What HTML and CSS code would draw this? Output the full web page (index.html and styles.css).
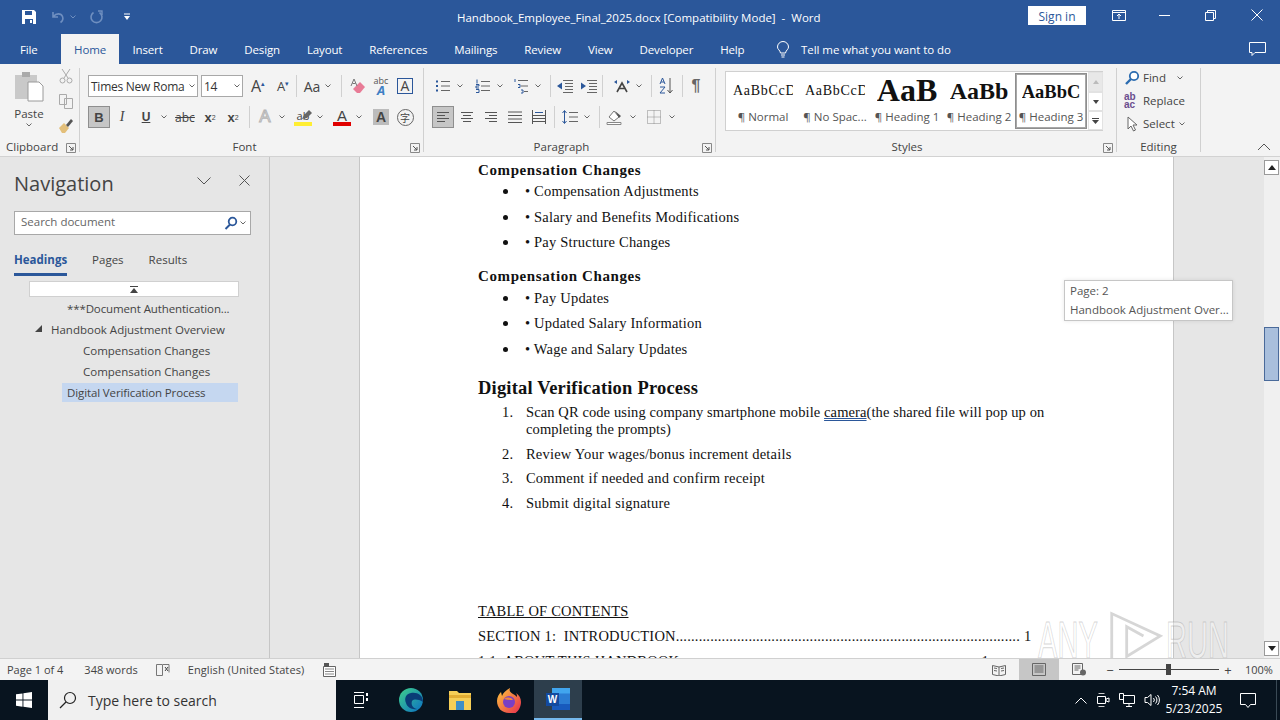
FILE: index.html
```html
<!DOCTYPE html>
<html lang="en">
<head>
    <meta charset="UTF-8">
    <title>Handbook_Employee_Final_2025.docx [Compatibility Mode] - Word</title>
    <link rel="stylesheet" href="styles.css">
</head>
<body>
<svg class="defs" width="0" height="0">
    <symbol id="chev" viewBox="0 0 8 8"><path d="M1.5 2.5 4 5l2.5-2.5" fill="none" stroke="#666" stroke-width="1"/></symbol>
    <symbol id="launch" viewBox="0 0 10 10"><path d="M.5.500h9v9h-9z" fill="none" stroke="#888"/><path d="M3 3l4 4M7 4v3H4" fill="none" stroke="#555"/></symbol>
    <symbol id="lines" viewBox="0 0 16 16"><path d="M1 3h14M1 6.500h14M1 10h14M1 13.500h14" stroke="#555" fill="none"/></symbol>
    <symbol id="left" viewBox="0 0 16 16"><path d="M2 3.500h12M2 6.500h8M2 9.500h12M2 12.500h8" stroke="#555" fill="none"/></symbol>
    <symbol id="center" viewBox="0 0 16 16"><path d="M2 3.500h12M4 6.500h8M2 9.500h12M4 12.500h8" stroke="#555" fill="none"/></symbol>
    <symbol id="right" viewBox="0 0 16 16"><path d="M2 3.500h12M6 6.500h8M2 9.500h12M6 12.500h8" stroke="#555" fill="none"/></symbol>
</svg>

<div class="titlebar">
    <div class="qat">
        <svg class="qat-save" width="16" height="16" viewBox="0 0 16 16"><path d="M1 1h12l2 2v12H1z" fill="#fff"/><path d="M4 2h7v4H4zM4 10h8v5H4z" fill="#2b579a"/><path d="M9 11h2v3H9z" fill="#fff"/></svg>
        <svg class="qat-undo" width="16" height="14" viewBox="0 0 16 14"><path d="M3 2v5h5M3.500 6.500C6 3 11 3 12.500 6.500c1 2.500 0 4.500-2 6" fill="none" stroke="#6f8fc0" stroke-width="1.600"/></svg>
        <svg class="qat-chev" width="8" height="8" viewBox="0 0 8 8"><path d="M1.500 2.500 4 5l2.500-2.500" fill="none" stroke="#6f8fc0"/></svg>
        <svg class="qat-redo" width="15" height="15" viewBox="0 0 15 15"><path d="M10.500 2.500a5.500 5.500 0 1 1-6 0" fill="none" stroke="#6f8fc0" stroke-width="1.600"/><path d="M9 1h4v4" fill="none" stroke="#6f8fc0" stroke-width="1.400"/></svg>
        <svg class="qat-more" width="8" height="8" viewBox="0 0 8 8"><path d="M1 1h6" stroke="#fff"/><path d="M1 3h6L4 7z" fill="#fff"/></svg>
    </div>
    <div class="doc-title">Handbook_Employee_Final_2025.docx [Compatibility Mode]&nbsp; -&nbsp; Word</div>
    <button class="signin">Sign in</button>
    <svg class="win-display" width="14" height="11" viewBox="0 0 14 11"><path d="M.5.500h13v10H.5zM.5 2.500h13" fill="none" stroke="#fff"/><path d="M7 9V4M5 6l2-2 2 2" fill="none" stroke="#fff"/></svg>
    <svg class="win-min" width="11" height="1"><path d="M0 .5h11" stroke="#fff"/></svg>
    <svg class="win-max" width="11" height="11" viewBox="0 0 11 11"><path d="M.5 2.500h8v8h-8zM2.500 2.500v-2h8v8h-2" fill="none" stroke="#fff"/></svg>
    <svg class="win-close" width="12" height="12" viewBox="0 0 12 12"><path d="M.5.500l11 11M11.500.500l-11 11" stroke="#fff"/></svg>
</div>

<div class="tabs">
    <a class="tab tab-file">File</a>
    <a class="tab active">Home</a>
    <a class="tab">Insert</a>
    <a class="tab">Draw</a>
    <a class="tab">Design</a>
    <a class="tab">Layout</a>
    <a class="tab">References</a>
    <a class="tab">Mailings</a>
    <a class="tab">Review</a>
    <a class="tab">View</a>
    <a class="tab">Developer</a>
    <a class="tab">Help</a>
    <svg class="bulb" width="14" height="17" viewBox="0 0 14 17"><path d="M4.500 12C4 9 1.500 8.500 1.500 6a5.500 5.500 0 0 1 11 0c0 2.500-2.500 3-3 6zM5 14h4M5.500 16h3" fill="none" stroke="#fff"/></svg>
    <span class="tellme">Tell me what you want to do</span>
    <svg class="comment" width="17" height="15" viewBox="0 0 17 15"><path d="M.5.500h16v10H6l-3 3v-3H.5z" fill="none" stroke="#fff"/></svg>
</div>

<div class="ribbon">
    <section class="group g-clip">
        <div class="clip-body">
            <div class="paste">
                <svg width="30" height="32" viewBox="0 0 30 32"><path d="M1 4h22v24H1z" fill="#c9c9c9"/><path d="M8 1h8v5H8z" fill="#aaa"/><path d="M14 11h11l4 4v15H14z" fill="#fff" stroke="#9a9a9a"/></svg>
                <span>Paste</span>
                <svg width="8" height="8"><use href="#chev"/></svg>
            </div>
            <div class="clip-small">
                <svg width="16" height="16" viewBox="0 0 16 16"><path d="M4 1l6 9M12 1l-6 9" stroke="#aaa" fill="none"/><circle cx="4.500" cy="12.500" r="2.500" fill="none" stroke="#aaa"/><circle cx="11.500" cy="12.500" r="2.500" fill="none" stroke="#aaa"/></svg>
                <svg width="16" height="16" viewBox="0 0 16 16"><path d="M1.500 1.500h7v10h-7zM6.500 5.500h8v10h-8z" fill="#f3f3f3" stroke="#aaa"/></svg>
                <svg width="16" height="16" viewBox="0 0 16 16"><path d="M1 10l5-5 5 5-4 5H4z" fill="#e3bf7a"/><path d="M8 7l5-6 2 2-5 6z" fill="#555"/></svg>
            </div>
        </div>
        <div class="group-label">Clipboard<svg class="launch" width="10" height="10"><use href="#launch"/></svg></div>
    </section>

    <section class="group g-font">
        <div class="rows">
            <div class="row">
                <div class="combo combo-font">Times New Roma<svg width="8" height="8"><use href="#chev"/></svg></div>
                <div class="combo combo-size m3">14<svg width="8" height="8"><use href="#chev"/></svg></div>
                <span class="tool m3 glyph">A<sup class="up blue">▴</sup></span>
                <span class="tool m1 glyph g-sm">A<sup class="up blue">▾</sup></span>
                <i class="sep m1"></i>
                <span class="tool sm m5 aa">Aa</span>
                <svg class="chev"><use href="#chev"/></svg>
                <i class="sep m7"></i>
                <span class="tool md m5"><svg width="16" height="16" viewBox="0 0 16 16"><path d="M7 15l-4-4 7-7 5 5-5 6z" fill="#e87b96"/><path d="M1 8l3-7 3 7M2.500 5.500h3" fill="none" stroke="#777"/></svg></span>
                <span class="tool md m1 abc-a">abc<b>A</b></span>
                <span class="tool md m2"><span class="a-box">A</span></span>
            </div>
            <div class="row">
                <span class="tool bold-on">B</span>
                <span class="tool ital">I</span>
                <span class="tool und">U</span>
                <svg class="chev"><use href="#chev"/></svg>
                <span class="tool md m4 strike">abc</span>
                <span class="tool md m3 sub">x<sub>2</sub></span>
                <span class="tool md m1 sub">x<sup>2</sup></span>
                <i class="sep m5"></i>
                <span class="tool md m4 effect">A</span>
                <svg class="chev"><use href="#chev"/></svg>
                <span class="tool md m4 hl">ab<svg class="pen" width="12" height="12" viewBox="0 0 12 12"><path d="M1 10l2-4 5-5 3 3-5 5z" fill="#666"/></svg><i></i></span>
                <svg class="chev"><use href="#chev"/></svg>
                <span class="tool md m5 red-a">A<i></i></span>
                <svg class="chev"><use href="#chev"/></svg>
                <span class="tool md m5"><span class="a-shade">A</span></span>
                <span class="tool md m2"><span class="phon">字</span></span>
            </div>
        </div>
        <div class="group-label">Font<svg class="launch" width="10" height="10"><use href="#launch"/></svg></div>
    </section>

    <section class="group g-para">
        <div class="rows">
            <div class="row">
                <span class="tool md"><svg width="16" height="16" viewBox="0 0 16 16"><path d="M6 3.500h9M6 8h9M6 12.500h9" stroke="#666"/><path d="M1 2.500h2v2H1zM1 7h2v2H1zM1 11.500h2v2H1z" fill="#2b579a"/></svg></span>
                <svg class="chev"><use href="#chev"/></svg>
                <span class="tool md m6"><svg width="16" height="16" viewBox="0 0 16 16"><path d="M6 3.500h9M6 8h9M6 12.500h9" stroke="#666"/><path d="M2 1.500v4M1 6.500h3v1.500H1v2h3M1 11.500h3v3H1" fill="none" stroke="#2b579a"/></svg></span>
                <svg class="chev"><use href="#chev"/></svg>
                <span class="tool md m4"><svg width="16" height="16" viewBox="0 0 16 16"><path d="M5 2.500h10M8 8h7M11 13.500h4" stroke="#666"/><path d="M2 1v3M5 6.500h2v3H5M8 12h2v3H8" fill="none" stroke="#2b579a"/></svg></span>
                <svg class="chev"><use href="#chev"/></svg>
                <i class="sep m6"></i>
                <span class="tool md m3"><svg width="18" height="14" viewBox="0 0 18 14"><path d="M7 1.500h10M9 4.500h8M9 7.500h8M9 10.500h8M7 13.500h10" stroke="#666"/><path d="M1 7l5-3.500v7z" fill="#2b579a"/></svg></span>
                <span class="tool md m2"><svg width="18" height="14" viewBox="0 0 18 14"><path d="M7 1.500h10M9 4.500h8M9 7.500h8M9 10.500h8M7 13.500h10" stroke="#666"/><path d="M6 7l-5-3.500v7z" fill="#2b579a"/></svg></span>
                <i class="sep m2"></i>
                <span class="tool md m8"><svg width="18" height="14" viewBox="0 0 18 14"><path d="M4 13l5-9 5 9M6 9.500h6" fill="none" stroke="#444" stroke-width="1.600"/><path d="M1 3l3-2v4zM17 3l-3-2v4z" fill="#2b579a"/></svg></span>
                <svg class="chev"><use href="#chev"/></svg>
                <i class="sep m6"></i>
                <span class="tool md m3"><svg width="16" height="18" viewBox="0 0 16 18"><path d="M2 7l2.500-6L7 7M3 5h3" fill="none" stroke="#2b579a"/><path d="M2 10h5l-5 6h5" fill="none" stroke="#2b579a"/><path d="M12 1v15M9.500 13l2.500 3 2.500-3" fill="none" stroke="#555"/></svg></span>
                <i class="sep m5"></i>
                <span class="tool md m2 pilcrow">¶</span>
            </div>
            <div class="row">
                <span class="tool md on"><svg width="16" height="16"><use href="#left"/></svg></span>
                <span class="tool md m2"><svg width="16" height="16"><use href="#center"/></svg></span>
                <span class="tool md m2"><svg width="16" height="16"><use href="#right"/></svg></span>
                <span class="tool md m2"><svg width="16" height="16"><use href="#lines"/></svg></span>
                <span class="tool md m2"><svg width="16" height="16" viewBox="0 0 16 16"><path d="M1.500 1v14M14.500 1v14M1 6.500h14M1 9.500h14M1 12.500h14" stroke="#555" fill="none"/><path d="M4 3.500h8" stroke="#2b579a"/></svg></span>
                <i class="sep m4"></i>
                <span class="tool md m4"><svg width="18" height="16" viewBox="0 0 18 16"><path d="M8 3.500h9M8 8h9M8 12.500h9" stroke="#666"/><path d="M3.500 2v12M1.500 4l2-2.500 2 2.500M1.500 12l2 2.500 2-2.500" fill="none" stroke="#2b579a"/></svg></span>
                <svg class="chev"><use href="#chev"/></svg>
                <i class="sep m6"></i>
                <span class="tool md m4"><svg width="18" height="16" viewBox="0 0 18 16"><path d="M3 8l5-6 5 6-5 4z" fill="#fff" stroke="#777"/><path d="M9 2l6 5-2 2z" fill="#555"/><path d="M1 13.500h14v2H1z" fill="#fff" stroke="#888"/></svg></span>
                <svg class="chev m1"><use href="#chev"/></svg>
                <span class="tool md m4"><svg width="14" height="14" viewBox="0 0 14 14"><path d="M.5.500h13v13H.5zM7 .5v13M.5 7h13" fill="none" stroke="#888" stroke-dasharray="1 1"/></svg></span>
                <svg class="chev m1"><use href="#chev"/></svg>
            </div>
        </div>
        <div class="group-label">Paragraph<svg class="launch" width="10" height="10"><use href="#launch"/></svg></div>
    </section>

    <section class="group g-styles">
        <div class="gallery">
            <div class="style-item"><span class="sample s-normal">AaBbCcDd</span><span class="style-name">¶ Normal</span></div>
            <div class="style-item"><span class="sample s-normal">AaBbCcDd</span><span class="style-name">¶ No Spac...</span></div>
            <div class="style-item"><span class="sample s-h1">AaB</span><span class="style-name">¶ Heading 1</span></div>
            <div class="style-item"><span class="sample s-h2">AaBb</span><span class="style-name">¶ Heading 2</span></div>
            <div class="style-item selected"><span class="sample s-h3">AaBbC</span><span class="style-name">¶ Heading 3</span></div>
            <div class="gallery-scroll">
                <span class="gs-up"><svg width="6" height="4" viewBox="0 0 6 4"><path d="M0 4l3-4 3 4z" fill="#bbb"/></svg></span>
                <span><svg width="6" height="4" viewBox="0 0 6 4"><path d="M0 0l3 4 3-4z" fill="#444"/></svg></span>
                <span><svg width="7" height="6" viewBox="0 0 7 6"><path d="M0 .5h7" stroke="#444"/><path d="M0 2l3.500 4L7 2z" fill="#444"/></svg></span>
            </div>
        </div>
        <div class="group-label">Styles<svg class="launch" width="10" height="10"><use href="#launch"/></svg></div>
    </section>

    <section class="group g-edit">
        <div class="edit-list">
            <div class="edit-item"><svg width="16" height="16" viewBox="0 0 16 16"><circle cx="10" cy="6" r="4.200" fill="#fff" stroke="#2b6cb0" stroke-width="1.800"/><path d="M7 9l-5 5" stroke="#2b6cb0" stroke-width="2.400"/></svg>Find<svg class="chev-in" width="8" height="8"><use href="#chev"/></svg></div>
            <div class="edit-item"><span class="rep">ab<br>ac</span>Replace</div>
            <div class="edit-item"><svg width="16" height="16" viewBox="0 0 16 16"><path d="M4 1v12l3-3 2.500 5 2-1L9 9h4z" fill="#fff" stroke="#666"/></svg>Select<svg class="chev-in tight" width="8" height="8"><use href="#chev"/></svg></div>
        </div>
        <div class="group-label">Editing</div>
    </section>
    <svg class="collapse" width="14" height="8" viewBox="0 0 14 8"><path d="M1 7l6-6 6 6" fill="none" stroke="#555"/></svg>
</div>

<div class="main">
    <aside class="nav">
        <div class="nav-head">
            <h2>Navigation</h2>
            <svg class="nav-chev" width="14" height="8" viewBox="0 0 14 8"><path d="M.5.500 7 7l6.500-6.500" fill="none" stroke="#555"/></svg>
            <svg class="nav-x" width="11" height="11" viewBox="0 0 11 11"><path d="M.5.500l10 10M10.500.500l-10 10" stroke="#555"/></svg>
        </div>
        <div class="nav-search">
            <span>Search document</span>
            <svg width="14" height="14" viewBox="0 0 14 14"><circle cx="8.500" cy="5.500" r="3.800" fill="none" stroke="#2b579a" stroke-width="1.800"/><path d="M6 8.500l-4.500 4.500" stroke="#2b579a" stroke-width="2"/></svg>
            <svg width="8" height="8"><use href="#chev"/></svg>
        </div>
        <div class="nav-tabs">
            <a class="nav-tab active">Headings</a>
            <a class="nav-tab">Pages</a>
            <a class="nav-tab">Results</a>
        </div>
        <div class="nav-top"><svg width="8" height="7" viewBox="0 0 8 7"><path d="M0 .5h8" stroke="#444"/><path d="M0 7l4-5 4 5z" fill="#444"/></svg></div>
        <ul class="tree">
            <li class="lv2">***Document Authentication...</li>
            <li class="lv1"><svg class="caret" width="7" height="7" viewBox="0 0 7 7"><path d="M7 0v7H0z" fill="#444"/></svg>Handbook Adjustment Overview</li>
            <li class="lv3">Compensation Changes</li>
            <li class="lv3">Compensation Changes</li>
            <li class="lv2 current">Digital Verification Process</li>
        </ul>
    </aside>

    <div class="doc-area">
        <article class="page">
            <h3>Compensation Changes</h3>
            <ul class="bullets">
                <li><i class="dot"></i>• Compensation Adjustments</li>
                <li><i class="dot"></i>• Salary and Benefits Modifications</li>
                <li><i class="dot"></i>• Pay Structure Changes</li>
            </ul>
            <h3 class="next">Compensation Changes</h3>
            <ul class="bullets">
                <li><i class="dot"></i>• Pay Updates</li>
                <li><i class="dot"></i>• Updated Salary Information</li>
                <li><i class="dot"></i>• Wage and Salary Updates</li>
            </ul>
            <h2>Digital Verification Process</h2>
            <ol class="steps">
                <li><span class="num">1.</span><span class="step-long">Scan QR code using company smartphone mobile <u>camera</u>(the shared file will pop up on completing the prompts)</span></li>
                <li><span class="num">2.</span><span>Review Your wages/bonus increment details</span></li>
                <li><span class="num">3.</span><span>Comment if needed and confirm receipt</span></li>
                <li><span class="num">4.</span><span>Submit digital signature</span></li>
            </ol>
            <p class="toc-title">TABLE OF CONTENTS</p>
            <p class="toc"><span>SECTION 1:&nbsp; INTRODUCTION</span><span class="leader">..........................................................................................</span><span class="toc-num">1</span></p>
            <p class="toc toc-short"><span>1.1. ABOUT THIS HANDBOOK</span><span class="leader">..............................................................................</span><span class="toc-num">1</span></p>
        </article>
        <div class="tooltip">
            <div>Page: 2</div>
            <div>Handbook Adjustment Over...</div>
        </div>
        <div class="watermark">
            <span>ANY</span>
            <svg width="56" height="52" viewBox="0 0 60 52"><path d="M4 50V2l52 24-36 22V16l18 10" fill="none" stroke="#999" stroke-opacity=".4" stroke-width="3"/></svg>
            <span>RUN</span>
        </div>
    </div>

    <div class="vscroll">
        <span class="vs-btn"><svg width="8" height="5" viewBox="0 0 8 5"><path d="M0 5l4-5 4 5z" fill="#222"/></svg></span>
        <span class="vs-thumb"></span>
        <span class="vs-btn vs-down"><svg width="8" height="5" viewBox="0 0 8 5"><path d="M0 0l4 5 4-5z" fill="#222"/></svg></span>
    </div>
</div>

<div class="statusbar">
    <span class="st-page">Page 1 of 4</span>
    <span class="st-words">348 words</span>
    <svg class="st-proof" width="14" height="14" viewBox="0 0 14 14"><path d="M.5 1.500h6v11h-6zM7 1.500h6v8" fill="none" stroke="#777"/><path d="M9 4l3 4M12 4L9 8" stroke="#444"/></svg>
    <span class="st-lang">English (United States)</span>
    <svg class="st-macro" width="13" height="14" viewBox="0 0 13 14"><path d="M.5 3.500h12v10H.5z" fill="#fff" stroke="#666"/><path d="M2 6h9M2 8.500h9M2 11h9" stroke="#888"/><path d="M1 0h5v4H1z" fill="#555"/></svg>
    <div class="st-right">
        <span class="view"><svg width="14" height="12" viewBox="0 0 14 12"><path d="M.5 1.500 7 3l6.500-1.500v9L7 12 .5 10.500zM7 3v9M2 4l3 .5M2 6.500l3 .5M9 4.500 12 4M9 7l3-.5" fill="none" stroke="#666"/></svg></span>
        <span class="view on"><svg width="14" height="13" viewBox="0 0 14 13"><path d="M.5.500h13v12H.5zM2.500 3h9M2.500 5h9M2.500 7h9M2.500 9h9" fill="none" stroke="#666"/></svg></span>
        <span class="view"><svg width="15" height="13" viewBox="0 0 15 13"><path d="M.5.500h10v11H.5zM2.500 3h6M2.500 5h6M2.500 7h4" fill="none" stroke="#666"/><circle cx="11" cy="9.500" r="3" fill="#666"/></svg></span>
        <div class="zoom">
            <i class="zoom-sign">−</i>
            <div class="slider"><i></i></div>
            <i class="zoom-sign">+</i>
        </div>
        <span class="zoom-val">100%</span>
    </div>
</div>

<div class="taskbar">
    <span class="start"><svg width="16" height="16" viewBox="0 0 16 16"><path d="M0 2.300 6.500 1.400v6.200H0zM7.400 1.300 16 0v7.600H7.400zM0 8.500h6.500v6.200L0 13.800zM7.400 8.500H16V16l-8.600-1.200z" fill="#fff"/></svg></span>
    <div class="search">
        <svg width="18" height="18" viewBox="0 0 18 18"><circle cx="11" cy="7" r="5.500" fill="none" stroke="#222" stroke-width="1.200"/><path d="M7 11l-6 6" stroke="#222" stroke-width="1.300"/></svg>
        <span>Type here to search</span>
    </div>
    <span class="task"><svg width="16" height="16" viewBox="0 0 16 16"><path d="M1 .5h10M1 15.500h10M1.500 3.500h9v8h-9z" fill="none" stroke="#fff"/><path d="M13 1h2v3h-2zM13 6h2v3h-2z" fill="#fff"/></svg></span>
    <span class="task m1"><svg width="26" height="26" viewBox="0 0 26 26"><defs><linearGradient id="edge" x1="0" y1="0" x2="1" y2="1"><stop offset="0" stop-color="#3fd08a"/><stop offset="1" stop-color="#0b6fc4"/></linearGradient></defs><circle cx="13" cy="13" r="12" fill="url(#edge)"/><path d="M25 15C25 8 19 5 13 6 8 7 6 11 8 16c1 4 6 7 11 6-5-1-6-5-5-8 2-2 6-2 11 1z" fill="#0a3d77"/></svg></span>
    <span class="task"><svg width="22" height="20" viewBox="0 0 22 20"><path d="M0 1h8l2 2h12v17H0z" fill="#f6cf57"/><path d="M0 5h22v3H0z" fill="#e3ae33"/><path d="M7 11h8v9H7z" fill="#3f8fc7"/></svg></span>
    <span class="task"><svg width="24" height="25" viewBox="0 0 24 25"><defs><linearGradient id="fox" x1="0" y1="0" x2="1" y2="1"><stop offset="0" stop-color="#ffc93a"/><stop offset="1" stop-color="#e5264f"/></linearGradient></defs><path d="M12 25C5 25 0 20 0 13 0 9 2 6 4 4l1 4c1-3 4-6 8-8-1 3 0 4 3 6 2 1 3 2 4 3 0-1 0-3-1-4 3 2 5 5 5 9 0 7-5 13-12 13z" fill="url(#fox)"/><circle cx="12" cy="14" r="6" fill="#7a3fc4"/><path d="M7 11c3-2 7-2 9 1-2 0-5 0-9-1z" fill="#f2873b"/></svg></span>
    <span class="task active"><svg width="24" height="22" viewBox="0 0 24 22"><path d="M6 0h18v22H6z" fill="#2b7cd3"/><path d="M6 0h18v5.500H6z" fill="#41a5ee"/><path d="M6 16h18v6H6z" fill="#185abd"/><path d="M0 5h13v13H0z" fill="#134a9f"/><text x="6.500" y="15" text-anchor="middle" class="word-w">W</text></svg></span>
    <div class="tray">
        <svg width="12" height="7" viewBox="0 0 12 7"><path d="M.5 6.500 6 1l5.500 5.500" fill="none" stroke="#fff"/></svg>
        <svg width="14" height="16" viewBox="0 0 14 16"><path d="M2.500 1.500h6M2.500 14.500h6" stroke="#ccc" fill="none"/><path d="M1.500 4.500h8v7h-8z" fill="none" stroke="#fff"/><path d="M10 7l3-1v4l-3-1z" fill="none" stroke="#fff"/></svg>
        <svg width="16" height="14" viewBox="0 0 16 14"><path d="M.5.500h4v6h-4zM4.500 2.500h11v8h-11zM10 10.500v3M7 13.500h6" fill="none" stroke="#fff"/></svg>
        <svg width="16" height="14" viewBox="0 0 16 14"><path d="M1 4.500h2.500L7 1.500v11l-3.500-3H1z" fill="none" stroke="#fff"/><path d="M9.500 5a3 3 0 0 1 0 4M11.500 3.500a5 5 0 0 1 0 7M13.500 2a7.500 7.500 0 0 1 0 10" fill="none" stroke="#fff"/></svg>
        <div class="clock"><span>7:54 AM</span><span>5/23/2025</span></div>
        <svg class="notif" width="16" height="15" viewBox="0 0 16 15"><path d="M.5.500h15v11h-5l-2.500 3-2.500-3h-5z" fill="none" stroke="#fff"/></svg>
        <i class="show-desktop"></i>
    </div>
</div>
</body>
</html>
```

FILE: styles.css
```css
* {
    box-sizing: border-box;
}
html, body {
    margin: 0;
    padding: 0;
    height: 720px;
    overflow: hidden;
}
body {
    font-family: "Open Sans", "Noto Sans", sans-serif;
    font-size: 11.5px;
    color: #444;
    background-color: #f3f3f3;
}
.defs {
    position: absolute;
}

/* title bar */
.titlebar {
    display: flex;
    align-items: center;
    height: 34px;
    background-color: #2b579a;
    color: #fff;
}
.qat {
    display: flex;
    align-items: center;
    width: 457px;
    padding-left: 21px;
}
.qat-undo { margin-left: 13px; }
.qat-chev { margin-left: 3px; }
.qat-redo { margin-left: 12px; }
.qat-more { margin-left: 19px; }
.doc-title {
    width: 571px;
    white-space: nowrap;
}
.signin {
    width: 58px;
    height: 19px;
    margin-top: -3px;
    padding: 2px 0 0;
    border: 0;
    background-color: #fff;
    color: #2b579a;
    font: inherit;
    font-size: 12px;
}
.titlebar > svg { margin-top: -4px; }
.win-display { margin-left: 26px; }
.win-min { margin-left: 33px; }
.win-max { margin-left: 35px; }
.win-close { margin-left: 35px; }

/* tabs */
.tabs {
    display: flex;
    align-items: center;
    height: 30px;
    padding: 0 14px 0 20px;
    background-color: #2b579a;
    color: #fff;
    letter-spacing: -.15px;
}
.tab {
    display: flex;
    align-items: center;
    height: 30px;
    padding: 0 13.500px;
    white-space: nowrap;
}
.tab-file {
    width: 41px;
    padding: 0;
}
.tab.active {
    background-color: #f3f3f3;
    color: #2b579a;
    width: 58px;
    padding: 0;
    justify-content: center;
}
.bulb { margin-left: 18px; }
.tellme { margin-left: 11px; letter-spacing: -.05px; }
.comment { margin-left: auto; }

/* ribbon */
.ribbon {
    position: relative;
    display: flex;
    height: 93px;
    padding-top: 4px;
    background-color: #f3f3f3;
    border-bottom: 1px solid #d2d2d2;
}
.group {
    position: relative;
    display: flex;
    flex-direction: column;
    height: 84px;
    border-right: 1px solid #d0d0d0;
}
.g-clip { width: 80px; }
.g-font { width: 344px; padding-left: 8px; }
.g-para { width: 292px; padding-left: 8px; }
.g-styles { width: 401px; padding-left: 9px; }
.g-edit { width: 84px; }
.group-label {
    position: absolute;
    left: 0;
    right: 0;
    top: 72px;
    height: 14px;
    line-height: 14px;
    text-align: center;
}
.launch {
    position: absolute;
    right: 3px;
    top: 3px;
}
.g-clip .group-label { text-align: left; padding-left: 6px; }
.g-font .group-label { padding-right: 14px; }
.g-para .group-label { padding-right: 16px; }
.g-styles .group-label { padding-right: 18px; }
.clip-body {
    display: flex;
    height: 68px;
}
.paste {
    display: flex;
    flex-direction: column;
    align-items: center;
    width: 58px;
    padding-top: 3px;
}
.paste span { margin-top: 3px; }
.clip-small {
    display: flex;
    flex-direction: column;
    gap: 9px;
    padding-top: 0;
}
.rows {
    display: flex;
    flex-direction: column;
    gap: 9px;
    padding-top: 7px;
}
.row {
    display: flex;
    align-items: center;
    height: 22px;
}
.tool {
    display: flex;
    align-items: center;
    justify-content: center;
    flex: none;
    width: 24px;
    height: 22px;
    position: relative;
    color: #444;
}
.tool.sm { width: 20px; }
.tool.md { width: 22px; }
.chev {
    flex: none;
    width: 12px;
    height: 8px;
}
.sep {
    flex: none;
    width: 1px;
    height: 22px;
    background-color: #d0d0d0;
}
.m1 { margin-left: 1px; }
.m2 { margin-left: 2px; }
.m3 { margin-left: 3px; }
.m4 { margin-left: 4px; }
.m5 { margin-left: 5px; }
.m6 { margin-left: 6px; }
.m7 { margin-left: 7px; }
.m8 { margin-left: 8px; }
.combo {
    display: flex;
    align-items: center;
    justify-content: space-between;
    flex: none;
    height: 22px;
    padding: 0 1px 0 2px;
    background-color: #fff;
    border: 1px solid #a8a8a8;
    color: #333;
    font-size: 12px;
    letter-spacing: -.25px;
    white-space: nowrap;
}
.combo-font { width: 110px; }
.combo-size { width: 42px; }
.glyph {
    font-size: 16px;
}
.g-sm { font-size: 13px; }
.up {
    font-size: 7px;
    margin-top: -6px;
}
.blue { color: #2b579a; }
.aa { font-size: 14px; }
.abc-a {
    flex-direction: column;
    font-size: 9px;
    line-height: 8px;
    color: #555;
}
.abc-a b {
    color: #3f7fc4;
    font-size: 13px;
    line-height: 11px;
    font-style: italic;
}
.a-box {
    width: 16px;
    height: 16px;
    line-height: 14px;
    text-align: center;
    border: 1px solid #2b579a;
    font-size: 14px;
}
.bold-on {
    width: 22px;
    background-color: #c6c6c6;
    border: 1px solid #8e8e8e;
    font-family: "Liberation Sans", sans-serif;
    font-weight: bold;
    font-size: 13px;
}
.ital {
    font-family: "Liberation Serif", serif;
    font-style: italic;
    font-size: 14px;
}
.und {
    font-family: "Liberation Sans", sans-serif;
    font-weight: bold;
    text-decoration: underline;
    font-size: 12px;
}
.strike {
    text-decoration: line-through;
    font-size: 12px;
}
.sub {
    font-family: "Liberation Sans", sans-serif;
    font-weight: bold;
    font-size: 13px;
}
.sub sub, .sub sup { font-size: 7px; font-weight: normal; }
.effect {
    font-family: "Liberation Sans", sans-serif;
    font-size: 17px;
    color: #f3f3f3;
    -webkit-text-stroke: 1px #b5b5b5;
}
.hl, .red-a {
    font-size: 11px;
    padding-bottom: 4px;
}
.pen {
    position: absolute;
    right: 1px;
    top: 3px;
}
.red-a {
    font-size: 15px;
    font-family: "Liberation Sans", sans-serif;
}
.hl i, .red-a i {
    position: absolute;
    left: 2px;
    bottom: 2px;
    width: 18px;
    height: 4px;
    background-color: #ffee33;
}
.red-a i { background-color: #e00000; }
.a-shade {
    width: 16px;
    height: 16px;
    line-height: 16px;
    text-align: center;
    background-color: #bcbcbc;
    font-family: "Liberation Sans", sans-serif;
    font-weight: bold;
    font-size: 14px;
}
.phon {
    width: 17px;
    height: 17px;
    line-height: 15px;
    text-align: center;
    border: 1px solid #666;
    border-radius: 50%;
    font-family: "Noto Sans CJK SC", sans-serif;
    font-size: 10px;
}
.pilcrow {
    font-family: "Liberation Sans", sans-serif;
    font-size: 16px;
    font-weight: bold;
    color: #666;
}
.tool.on {
    background-color: #c6c6c6;
    border: 1px solid #8e8e8e;
}

/* style gallery */
.gallery {
    display: flex;
    width: 378px;
    height: 60px;
    margin-top: 3px;
    padding: 1px;
    background-color: #fff;
    border: 1px solid #d0d0d0;
}
.style-item {
    display: flex;
    flex-direction: column;
    align-items: center;
    flex: none;
    width: 72px;
    height: 56px;
    overflow: hidden;
    color: #555;
    white-space: nowrap;
}
.style-item.selected {
    border: 2px solid #a8a8a8;
    outline: 1px solid #8e8e8e;
    outline-offset: -1px;
}
.sample {
    display: flex;
    align-items: center;
    justify-content: center;
    height: 36px;
    color: #111;
    font-family: "Liberation Serif", serif;
    overflow: hidden;
}
.s-normal { width: 60px; font-size: 14px; letter-spacing: .7px; justify-content: flex-start; }
.s-h1 { font-size: 32px; font-weight: bold; margin-top: -1px; margin-bottom: 1px; }
.s-h2 { font-size: 24px; font-weight: bold; }
.s-h3 { font-size: 18.500px; font-weight: bold; }
.selected .sample { height: 35px; }
.style-name { line-height: 14px; margin-top: 1px; }
.selected .style-name { margin-top: 0; }
.gallery-scroll {
    display: flex;
    flex-direction: column;
    flex: none;
    width: 15px;
    margin: -1px 0 -1px 1px;
}
.gallery-scroll span {
    display: flex;
    align-items: center;
    justify-content: center;
    height: 19px;
    border: 1px solid #e2e2e2;
    background-color: #fff;
}
.gallery-scroll .gs-up { height: 20px; background-color: #e8e8e8; }

/* editing */
.edit-list {
    display: flex;
    flex-direction: column;
    margin-top: -2px;
    padding-left: 7px;
}
.edit-item {
    display: flex;
    align-items: center;
    gap: 3px;
    height: 23px;
    white-space: nowrap;
}
.chev-in { margin-left: 7px; }
.chev-in.tight { margin-left: 0; }
.rep {
    width: 16px;
    font-family: "Liberation Sans", sans-serif;
    font-weight: bold;
    font-size: 10px;
    line-height: 8px;
    color: #6b4d8e;
}
.collapse {
    position: absolute;
    right: 9px;
    bottom: 5px;
}

/* main area */
.main {
    display: flex;
    height: 501px;
    overflow: hidden;
}
.nav {
    flex: none;
    width: 270px;
    padding: 0 14px;
    background-color: #e6e6e6;
    border-right: 1px solid #c6c6c6;
}
.nav-head {
    display: flex;
    align-items: center;
    height: 54px;
    padding-bottom: 1px;
}
.nav-head h2 {
    margin: 0;
    font-size: 20px;
    font-weight: normal;
    color: #444;
    width: 183px;
}
.nav-x { margin-left: 28px; margin-top: -6px; }
.nav-chev { margin-top: -6px; }
.nav-search {
    display: flex;
    align-items: center;
    width: 237px;
    height: 24px;
    padding: 0 3px 0 6px;
    background-color: #fff;
    border: 1px solid #a8a8a8;
    color: #666;
}
.nav-search span { flex: 1; margin-top: -3px; }
.nav-search svg + svg { margin-left: 1px; }
.nav-tabs {
    display: flex;
    height: 41px;
    padding-top: 14px;
}
.nav-tab {
    height: 27px;
    margin-right: 25px;
    line-height: 22px;
}
.nav-tab.active {
    color: #2b579a;
    font-weight: bold;
    border-bottom: 3px solid #2b579a;
}
.nav-top {
    display: flex;
    align-items: center;
    justify-content: center;
    width: 210px;
    height: 16px;
    margin: 5px 0 1px 15px;
    background-color: #fff;
    border: 1px solid #d0d0d0;
}
.tree {
    list-style: none;
    margin: 0;
    padding: 0;
}
.tree li {
    position: relative;
    height: 21px;
    line-height: 21px;
    white-space: nowrap;
}
.lv1 { padding-left: 37px; }
.lv2 { padding-left: 53px; letter-spacing: -.12px; }
.lv3 { padding-left: 69px; }
.caret {
    position: absolute;
    left: 21px;
    top: 6px;
}
.tree .current {
    height: 19px;
    line-height: 19px;
    margin: 1px 0 0 48px;
    width: 176px;
    padding-left: 5px;
    background-color: #c5d7f0;
}

/* document */
.doc-area {
    position: relative;
    flex: 1;
    padding-left: 89px;
    background-color: #e6e6e6;
}
.page {
    width: 815px;
    height: 520px;
    padding: 4px 118px 0 118px;
    background-color: #fff;
    border-left: 1px solid #c6c6c6;
    border-right: 1px solid #c6c6c6;
    font-family: "Liberation Serif", serif;
    font-size: 14.500px;
    letter-spacing: .2px;
    color: #111;
}
.page h3 {
    margin: 0;
    height: 18px;
    line-height: 18px;
    font-size: 15px;
    letter-spacing: .6px;
}
.page h3.next { margin-top: 11.500px; }
.page h2 {
    margin: 14px 0 0;
    height: 24px;
    line-height: 24px;
    font-size: 18.500px;
}
.bullets, .steps {
    list-style: none;
    margin: 0;
    padding: 0;
}
.bullets li {
    display: flex;
    align-items: center;
    height: 25.600px;
}
.dot {
    width: 5px;
    height: 5px;
    margin: 0 17px 0 25px;
    border-radius: 50%;
    background-color: #111;
}
.steps { margin-top: 4px; }
.steps li {
    display: flex;
    line-height: 17px;
    margin-bottom: 7.700px;
}
.num {
    flex: none;
    width: 48px;
    padding-left: 24px;
}
.step-long { letter-spacing: .1px; }
.steps u {
    text-decoration: underline double #2b579a;
    text-decoration-thickness: 1px;
}
.toc-title {
    margin: 89px 0 0;
    line-height: 20px;
    text-decoration: underline;
}
.toc {
    display: flex;
    margin: 5px 0 0;
    line-height: 20px;
    white-space: nowrap;
}
.toc-num { margin-left: 4px; }
.tooltip {
    position: absolute;
    left: 794px;
    top: 123px;
    width: 169px;
    height: 41px;
    padding: 0 5px;
    background-color: #fff;
    border: 1px solid #c6c6c6;
    box-shadow: 0 0 4px rgba(0, 0, 0, .1);
    line-height: 19px;
    color: #555;
    white-space: nowrap;
}
.watermark {
    position: absolute;
    left: 768px;
    top: 457px;
    display: flex;
    align-items: center;
    height: 52px;
    font-family: "Liberation Sans", sans-serif;
    font-size: 52px;
    color: rgba(255, 255, 255, .35);
    -webkit-text-stroke: 1px rgba(150, 150, 150, .4);
}
.watermark span {
    display: block;
    width: 64px;
    transform: scaleX(.56);
    transform-origin: left center;
}
.watermark svg { margin: -8px 2px 0 6px; }

/* scrollbar */
.vscroll {
    display: flex;
    flex-direction: column;
    flex: none;
    width: 16px;
    padding-top: 3px;
    background-color: #f0f0f0;
}
.vs-btn {
    display: flex;
    align-items: center;
    justify-content: center;
    width: 15px;
    height: 15px;
    background-color: #fff;
    border: 1px solid #9a9a9a;
}
.vs-thumb {
    width: 15px;
    height: 54px;
    margin-top: 152px;
    background-color: #a9bfdc;
    border: 1px solid #4a6a9a;
}
.vs-down { margin-top: 260px; }

/* status bar */
.statusbar {
    display: flex;
    align-items: center;
    height: 22px;
    padding-left: 7px;
    background-color: #f3f3f3;
    border-top: 1px solid #d0d0d0;
    color: #444;
    font-size: 11px;
    white-space: nowrap;
}
.st-words { margin-left: 21px; }
.st-proof { margin-left: 18px; }
.st-lang { margin-left: 18px; letter-spacing: .1px; }
.st-macro { margin-left: 19px; }
.st-right {
    display: flex;
    align-items: center;
    height: 21px;
    margin-left: auto;
}
.view {
    display: flex;
    align-items: center;
    justify-content: center;
    width: 40px;
    height: 21px;
}
.view.on { background-color: #c6c6c6; }
.zoom {
    display: flex;
    align-items: center;
    margin-left: 6px;
    gap: 4px;
}
.zoom-sign {
    width: 10px;
    text-align: center;
    font-style: normal;
    font-size: 13px;
}
.slider {
    position: relative;
    width: 100px;
    height: 1px;
    background-color: #444;
}
.slider i {
    position: absolute;
    left: 47px;
    top: -5px;
    width: 5px;
    height: 11px;
    background-color: #444;
}
.zoom-val {
    width: 47px;
    padding-left: 12px;
}

/* taskbar */
.taskbar {
    display: flex;
    align-items: center;
    height: 40px;
    background-color: #08141f;
    color: #fff;
}
.start {
    display: flex;
    align-items: center;
    justify-content: center;
    width: 48px;
    height: 40px;
}
.search {
    display: flex;
    align-items: center;
    gap: 11px;
    width: 288px;
    height: 40px;
    padding-left: 11px;
    background-color: #f0f0f0;
    color: #333;
    font-size: 14px;
}
.task {
    display: flex;
    align-items: center;
    justify-content: center;
    width: 49px;
    height: 40px;
}
.task.active {
    width: 48px;
    margin-left: 1px;
    background-color: #2d3e4c;
    border-bottom: 2px solid #76b9ed;
}
.word-w {
    fill: #fff;
    font-family: "Liberation Sans", sans-serif;
    font-weight: bold;
    font-size: 10px;
}
.tray {
    display: flex;
    align-items: center;
    gap: 9px;
    height: 40px;
    margin-left: auto;
    padding-right: 3px;
}
.clock {
    display: flex;
    flex-direction: column;
    align-items: center;
    width: 62px;
    margin-left: -6px;
    font-size: 12px;
    line-height: 18px;
}
.notif { margin-left: 6px; }
.show-desktop {
    width: 1px;
    height: 40px;
    margin-left: 11px;
    background-color: #3a4a55;
}
```
